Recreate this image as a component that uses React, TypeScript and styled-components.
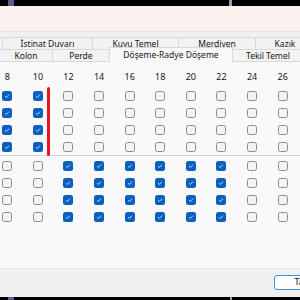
import * as React from 'react'
import styled, {createGlobalStyle} from 'styled-components'

const Global = createGlobalStyle({
	'html, body': {
		margin: 0,
		padding: 0,
		width: '300px',
		height: '300px',
		overflow: 'hidden',
		background: '#f0f0f0',
	},
	'body': {
		fontFamily: '"Noto Sans", "DejaVu Sans", sans-serif',
		color: '#161616',
	},
})

const Screen = styled('div')({
	width: '300px',
	height: '300px',
	display: 'flex',
	flexDirection: 'column',
	overflow: 'hidden',
})

const Strip = styled('div')<{$h: number}>(({$h}) => ({
	height: `${$h}px`,
	flex: 'none',
	background: '#000',
	display: 'flex',
	alignItems: 'stretch',
}))

const StripMark = styled('div')<{$left: number, $w: number, $c: string}>(({$left, $w, $c}) => ({
	marginLeft: `${$left}px`,
	width: `${$w}px`,
	background: $c,
}))

const Caption = styled('div')({
	height: '25px',
	flex: 'none',
	background: '#fbf1ef',
	borderBottom: '1px solid #e2e2e2',
})

const TabArea = styled('div')({
	paddingTop: '5px',
	flex: 'none',
	background: '#f0f0f0',
})

const TabRow = styled('div')({
	display: 'flex',
	whiteSpace: 'nowrap',
	height: '12px',
	position: 'relative',
})

const Tab = styled('div')<{$w: number, $active?: boolean}>(({$w, $active}) => ({
	flex: 'none',
	boxSizing: 'border-box',
	width: `${$w}px`,
	fontSize: '8.5px',
	lineHeight: $active ? '13px' : '12px',
	textAlign: 'center',
	background: $active ? '#f9f9f9' : '#f2f2f2',
	border: '1px solid #d9d9d9',
	borderBottom: $active ? 'none' : '1px solid #d9d9d9',
	marginLeft: '-1px',
	marginTop: $active ? '-2px' : 0,
	height: $active ? '15px' : '13px',
	position: 'relative',
	zIndex: $active ? 2 : 1,
	overflow: 'hidden',
}))

const Content = styled('div')({
	flex: 'none',
	height: '207px',
	background: '#f9f9f9',
	borderTop: '1px solid #d9d9d9',
	boxSizing: 'border-box',
	paddingTop: '8px',
	position: 'relative',
})

const Grid = styled('div')({
	marginLeft: '-8px',
	display: 'grid',
	gridTemplateColumns: 'repeat(10, 30.6px)',
	gridAutoRows: '17px',
	alignItems: 'center',
	justifyItems: 'center',
})

const Label = styled('div')({
	fontSize: '9px',
	lineHeight: '14px',
	height: '14px',
	marginBottom: '3px',
	alignSelf: 'start',
})

const Separator = styled('div')({
	height: '1px',
	borderTop: '1px solid #d4d4d4',
	background: '#fdfdfd',
	margin: '0 0 0 0',
})

const Box = styled('div')<{$on: boolean}>(({$on}) => ({
	width: '10px',
	height: '10px',
	boxSizing: 'border-box',
	borderRadius: '2.5px',
	background: $on ? '#0a5fc0' : '#f4f4f4',
	border: $on ? 'none' : '1px solid #8b8b8b',
	display: 'flex',
	alignItems: 'center',
	justifyContent: 'center',
}))

const Marker = styled('div')({
	position: 'absolute',
	left: '47px',
	top: '25px',
	width: '3px',
	height: '69px',
	borderRadius: '1.5px',
	background: '#e8141e',
})

const Footer = styled('div')({
	flex: 1,
	background: '#f0f0f0',
	borderTop: '1px solid #e6e6e6',
	display: 'flex',
	alignItems: 'flex-start',
	paddingTop: '6px',
	paddingLeft: '274px',
	overflow: 'hidden',
})

const Button = styled('div')({
	flex: 'none',
	width: '72px',
	height: '15px',
	boxSizing: 'border-box',
	border: '1.5px solid #3d8fd8',
	borderRadius: '3px',
	background: '#fdfdfd',
	fontSize: '9px',
	lineHeight: '12px',
	textAlign: 'center',
})

const Check = () => (
	<svg width="6" height="6" viewBox="0 0 6 6">
		<path d="M1 3.2 L2.4 4.5 L5 1.6" fill="none" stroke="#cfe2f7" strokeWidth="0.9" />
	</svg>
)

const row1 = [
	{t: '', w: 4},
	{t: 'İstinat Duvarı', w: 91},
	{t: 'Kuyu Temel', w: 87},
	{t: 'Merdiven', w: 78},
	{t: 'Kazık', w: 60},
]
const row2 = [
	{t: 'Kolon', w: 54},
	{t: 'Perde', w: 58},
	{t: 'Döşeme-Radye Döşeme', w: 124, active: true},
	{t: 'Tekil Temel', w: 72},
]
const cols = [8, 10, 12, 14, 16, 18, 20, 22, 24, 26]
const top = cols.map((_, i) => i < 2)
const bottom = cols.map((_, i) => i >= 2 && i < 8)

export default function App() {
	return (
		<Screen>
			<Global />
			<Strip $h={6}>
				<StripMark $left={8} $w={6} $c="#5b5d8c" />
				<StripMark $left={215} $w={3} $c="#9c9ca4" />
			</Strip>
			<Caption />
			<TabArea>
				<TabRow>
					{row1.map((r, i) => <Tab key={i} $w={r.w}>{r.t}</Tab>)}
				</TabRow>
				<TabRow>
					{row2.map((r, i) => <Tab key={i} $w={r.w} $active={r.active}>{r.t}</Tab>)}
				</TabRow>
			</TabArea>
			<Content>
				<Grid>
					{cols.map(c => <Label key={c}>{c}</Label>)}
					{[0, 1, 2, 3].map(r => top.map((on, i) => (
						<Box key={`a${r}${i}`} $on={on}>{on && <Check />}</Box>
					)))}
				</Grid>
				<Separator />
				<Grid>
					{[0, 1, 2, 3].map(r => bottom.map((on, i) => (
						<Box key={`b${r}${i}`} $on={on}>{on && <Check />}</Box>
					)))}
				</Grid>
				<Marker />
			</Content>
			<Footer>
				<Button>Tamam</Button>
			</Footer>
			<Strip $h={3}>
				<StripMark $left={8} $w={6} $c="#5b5d8c" />
				<StripMark $left={216} $w={2} $c="#9c9ca4" />
			</Strip>
		</Screen>
	)
}
